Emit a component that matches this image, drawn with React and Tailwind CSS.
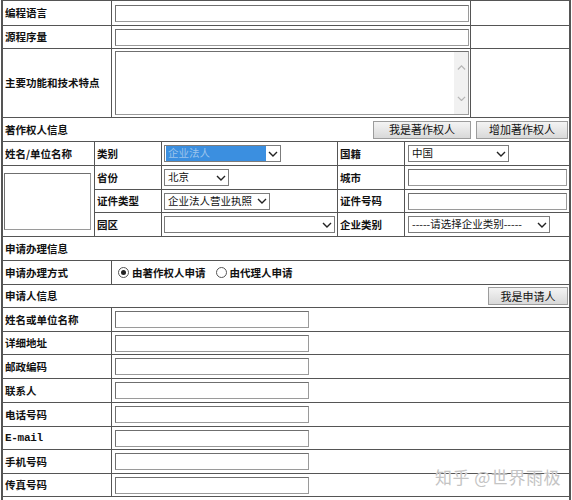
import React from 'react';

const Chevron = ({ color = '#222', up = false, size = 10 }) => (
    <svg width={size} height={size * 0.6} viewBox="0 0 10 6" className="shrink-0">
        <path
            d={up ? 'M1 5 L5 1 L9 5' : 'M1 1 L5 5 L9 1'}
            fill="none"
            stroke={color}
            strokeWidth="1.4"
        />
    </svg>
);

const TextBox = ({ w }) => (
    <div
        className="h-[17px] bg-white border border-[#9a9a9a] border-t-[#6f6f6f] border-l-[#6f6f6f] shrink-0"
        style={{ width: w }}
    />
);

const Select = ({ w, text, highlight }) => (
    <div
        className="h-[17px] bg-white border border-[#7c7c7c] flex items-center pl-[1px] pr-[2px] shrink-0"
        style={{ width: w }}
    >
        <div
            className={
                'flex-1 min-w-0 h-full flex items-center pl-[2px] text-[10.5px] font-normal leading-none whitespace-nowrap overflow-hidden ' +
                (highlight ? 'bg-[#3b8fe0] text-[#9cc4ec]' : 'text-[#111]')
            }
        >
            {text}
        </div>
        <div className="pl-[2px]">
            <Chevron />
        </div>
    </div>
);

const Btn = ({ w, children }) => (
    <div
        className="h-[18px] flex items-center justify-center text-[11px] font-normal text-[#111] border border-[#9c9c9c] bg-gradient-to-b from-[#f4f4f4] to-[#d9d9d9] shrink-0"
        style={{ width: w }}
    >
        {children}
    </div>
);

const Label = ({ children, w = 'w-[109px]', mono }) => (
    <div
        className={
            w +
            ' shrink-0 h-full border-r border-[#555] flex items-center pl-[2px] whitespace-nowrap ' +
            (mono ? 'font-["Liberation_Mono",monospace] text-[11px] tracking-[-0.3px]' : '')
        }
    >
        {children}
    </div>
);

const Radio = ({ checked }) => (
    <div className="w-[11px] h-[11px] rounded-full border border-[#555] bg-white flex items-center justify-center shrink-0">
        {checked && <div className="w-[5px] h-[5px] rounded-full bg-[#222]" />}
    </div>
);

const applicantRows = [
    ['姓名或单位名称', 'h-[24px]'],
    ['详细地址', 'h-[23px]'],
    ['邮政编码', 'h-[24px]'],
    ['联系人', 'h-[24px]'],
    ['电话号码', 'h-[24px]'],
    ['E-mail', 'h-[23px]', true],
    ['手机号码', 'h-[24px]'],
    ['传真号码', 'h-[23px]'],
];

export default function App() {
    return (
        <div className="w-[572px] h-[500px] overflow-hidden bg-white">
            <div className='relative ml-px w-[570px] border-t border-l-2 border-r-2 border-[#555] bg-white text-[10.5px] font-bold text-[#111] font-["Noto_Sans_CJK_SC",sans-serif]'>
                {/* 软件信息 */}
                <div className="h-[25px] border-b border-[#555] flex">
                    <Label>编程语言</Label>
                    <div className="w-[359px] shrink-0 h-full border-r border-[#555] flex items-center pl-[3px]">
                        <TextBox w={354} />
                    </div>
                </div>
                <div className="h-[23px] border-b border-[#555] flex">
                    <Label>源程序量</Label>
                    <div className="w-[359px] shrink-0 h-full border-r border-[#555] flex items-center pl-[3px]">
                        <TextBox w={354} />
                    </div>
                </div>
                <div className="h-[69px] border-b border-[#555] flex">
                    <Label>主要功能和技术特点</Label>
                    <div className="w-[359px] shrink-0 h-full border-r border-[#555] flex items-center pl-[3px]">
                        <div className="w-[354px] h-[64px] border border-[#9a9a9a] border-t-[#6f6f6f] border-l-[#6f6f6f] bg-white flex justify-end">
                            <div className="w-[14px] h-full bg-[#f1f1f1] flex flex-col items-center justify-between py-[13px]">
                                <Chevron color="#b5b5b5" up size={9} />
                                <Chevron color="#b5b5b5" size={9} />
                            </div>
                        </div>
                    </div>
                </div>

                {/* 著作权人信息 */}
                <div className="h-[24px] border-b border-[#555] flex items-center pl-[2px]">
                    <span className="flex-1">著作权人信息</span>
                    <div className="flex gap-[5px] pr-[1px]">
                        <Btn w={98}>我是著作权人</Btn>
                        <Btn w={92}>增加著作权人</Btn>
                    </div>
                </div>
                <div className="grid grid-cols-[92px_67px_176px_67px_1fr] grid-rows-[24px_24px_23px_24px]">
                    <div className="border-r border-b border-[#555] flex items-center pl-[2px]">姓名/单位名称</div>
                    <div className="border-r border-b border-[#555] flex items-center pl-[2px]">类别</div>
                    <div className="border-r border-b border-[#555] flex items-center pl-[2px]">
                        <Select w={117} text="企业法人" highlight />
                    </div>
                    <div className="border-r border-b border-[#555] flex items-center pl-[2px]">国籍</div>
                    <div className="border-b border-[#555] flex items-center pl-[3px]">
                        <Select w={101} text="中国" />
                    </div>

                    <div className="row-span-3 border-r border-b border-[#555] flex items-center pl-[1px]">
                        <div className="w-[87px] h-[57px] border border-[#9a9a9a] border-t-[#6f6f6f] border-l-[#6f6f6f] bg-white" />
                    </div>
                    <div className="border-r border-b border-[#555] flex items-center pl-[2px]">省份</div>
                    <div className="border-r border-b border-[#555] flex items-center pl-[2px]">
                        <Select w={65} text="北京" />
                    </div>
                    <div className="border-r border-b border-[#555] flex items-center pl-[2px]">城市</div>
                    <div className="border-b border-[#555] flex items-center pl-[3px]">
                        <TextBox w={159} />
                    </div>

                    <div className="border-r border-b border-[#555] flex items-center pl-[2px]">证件类型</div>
                    <div className="border-r border-b border-[#555] flex items-center pl-[2px]">
                        <Select w={106} text="企业法人营业执照" />
                    </div>
                    <div className="border-r border-b border-[#555] flex items-center pl-[2px]">证件号码</div>
                    <div className="border-b border-[#555] flex items-center pl-[3px]">
                        <TextBox w={159} />
                    </div>

                    <div className="border-r border-b border-[#555] flex items-center pl-[2px]">园区</div>
                    <div className="border-r border-b border-[#555] flex items-center pl-[2px]">
                        <Select w={171} text="" />
                    </div>
                    <div className="border-r border-b border-[#555] flex items-center pl-[2px]">企业类别</div>
                    <div className="border-b border-[#555] flex items-center pl-[3px]">
                        <Select w={142} text="-----请选择企业类别-----" />
                    </div>
                </div>

                {/* 申请办理信息 */}
                <div className="h-[24px] border-b border-[#555] flex items-center pl-[2px]">申请办理信息</div>
                <div className="h-[24px] border-b border-[#555] flex">
                    <Label>申请办理方式</Label>
                    <div className="flex items-center pl-[6px] text-[10.5px]">
                        <Radio checked />
                        <span className="ml-[3px]">由著作权人申请</span>
                        <span className="ml-[10px]"><Radio /></span>
                        <span className="ml-[3px]">由代理人申请</span>
                    </div>
                </div>

                {/* 申请人信息 */}
                <div className="h-[23px] border-b border-[#555] flex items-center pl-[2px]">
                    <span className="flex-1 self-start pt-[3px]">申请人信息</span>
                    <div className="pr-[1px]">
                        <Btn w={80}>我是申请人</Btn>
                    </div>
                </div>
                {applicantRows.map(([label, h, mono]) => (
                    <div key={label} className={h + ' border-b border-[#555] flex'}>
                        <Label mono={mono}>{label}</Label>
                        <div className="flex items-center pl-[3px]">
                            <TextBox w={194} />
                        </div>
                    </div>
                ))}
                <div className="h-[24px]" />

                {/* 水印 */}
                <div className='absolute left-[432px] top-[463px] text-[17px] font-normal text-[#c4c4c4] tracking-[0.5px] font-["Noto_Sans_CJK_SC",sans-serif] [text-shadow:0_0_1px_#fff]'>
                    知乎 @世界雨极
                </div>
            </div>
        </div>
    );
}
